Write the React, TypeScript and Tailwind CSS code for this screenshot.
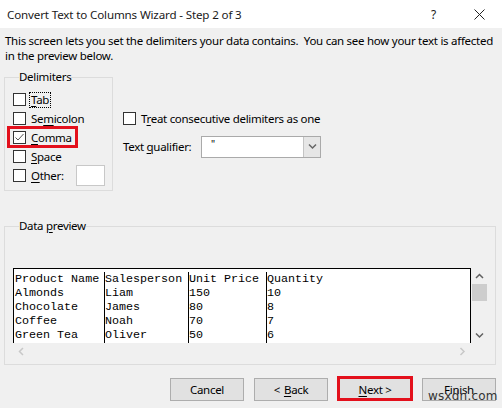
import React from "react";

function Box({ checked = false }: { checked?: boolean }) {
  return (
    <span className="w-[13px] h-[13px] shrink-0 bg-white border border-[#333333] flex items-center justify-center">
      {checked && (
        <svg width="11" height="11" viewBox="0 0 11 11">
          <path d="M1.5 5.5 L4 8 L9.5 2" fill="none" stroke="#555" strokeWidth="1" />
        </svg>
      )}
    </span>
  );
}

function Chevron({ dir, color }: { dir: "up" | "down" | "left" | "right"; color: string }) {
  const d =
    dir === "up"
      ? "M1 5 L4.5 1.5 L8 5"
      : dir === "down"
      ? "M1 1.5 L4.5 5 L8 1.5"
      : dir === "left"
      ? "M5 1 L1.5 4.5 L5 8"
      : "M1.5 1 L5 4.5 L1.5 8";
  const w = dir === "up" || dir === "down" ? 9 : 7;
  const h = dir === "up" || dir === "down" ? 7 : 9;
  return (
    <svg width={w} height={h} viewBox={`0 0 ${w} ${h}`}>
      <path d={d} fill="none" stroke={color} strokeWidth="1.5" />
    </svg>
  );
}

const rows = [
  ["Product Name", "Salesperson", "Unit Price", "Quantity"],
  ["Almonds", "Liam", "150", "10"],
  ["Chocolate", "James", "80", "8"],
  ["Coffee", "Noah", "70", "7"],
  ["Green Tea", "Oliver", "50", "6"],
];

export default function App() {
  return (
    <div className="w-[502px] h-[408px] bg-[#f0f0f0] font-['Noto_Sans',sans-serif] text-[11.5px] leading-[15px] tracking-[-0.3px] text-black overflow-hidden relative">
      {/* title bar */}
      <div className="h-[28px] bg-white flex items-center pl-[7px] pr-[17px] text-[#1a1a1a]">
        <span className="text-[11.6px] tracking-[-0.15px]">Convert Text to Columns Wizard - Step 2 of 3</span>
        <span className="ml-auto mr-[38px] text-[12px]">?</span>
        <svg width="11" height="11" viewBox="0 0 11 11">
          <path d="M0.5 0.5 L10.5 10.5 M10.5 0.5 L0.5 10.5" stroke="#222" strokeWidth="1" />
        </svg>
      </div>

      <p className="px-[5px] pt-[5px] leading-[15px] whitespace-nowrap tracking-[-0.27px]">
        This screen lets you set the delimiters your data contains.&nbsp; You can see how your text is affected
        <br />
        in the preview below.
      </p>

      <div className="flex mt-[6px] pl-[4px]">
        <fieldset className="w-[109px] h-[122px] border border-[#dcdcdc] pl-[8px] pr-[7px] pt-[5px]">
          <legend className="ml-[6px] leading-[16px]">Delimiters</legend>
          <div className="h-[19px] flex items-center gap-[3px]">
            <Box />
            <span className="border border-dotted border-black leading-[14px] px-[1px]">
              <u className="underline-offset-2">T</u>ab
            </span>
          </div>
          <div className="h-[19px] flex items-center gap-[5px]">
            <Box />
            <span>
              Se<u className="underline-offset-2">m</u>icolon
            </span>
          </div>
          <div className="h-[19px] flex items-center gap-[5px] relative">
            <Box checked />
            <span>
              <u className="underline-offset-2">C</u>omma
            </span>
            <span className="absolute left-[-6px] top-[-2px] w-[71px] h-[22px] border-[3px] border-[#e3101c]" />
          </div>
          <div className="h-[19px] flex items-center gap-[5px]">
            <Box />
            <span>
              <u className="underline-offset-2">S</u>pace
            </span>
          </div>
          <div className="h-[19px] flex items-center gap-[5px]">
            <Box />
            <span>
              <u className="underline-offset-2">O</u>ther:
            </span>
            <span className="ml-auto w-[29px] h-[21px] bg-white border border-[#c8c8c8]" />
          </div>
        </fieldset>

        <div className="ml-[10px] pt-[40px]">
          <div className="h-[19px] flex items-center gap-[5px]">
            <Box />
            <span>
              T<u className="underline-offset-2">r</u>eat consecutive delimiters as one
            </span>
          </div>
          <div className="mt-[8px] h-[21px] flex items-center">
            <span className="w-[78px]">
              Text <u className="underline-offset-2">q</u>ualifier:
            </span>
            <div className="w-[120px] h-[22px] bg-white border border-[#aaaaaa] flex">
              <span className="flex-1 pl-[9px] leading-[14px] text-[10px]">"</span>
              <span className="w-[17px] h-full bg-[#e6e6e6] border-l border-[#c4c4c4] flex items-center justify-center">
                <Chevron dir="down" color="#666" />
              </span>
            </div>
          </div>
        </div>
      </div>

      <fieldset className="ml-[4px] mt-[27px] w-[492px] h-[147px] border border-[#dcdcdc] pl-[8px] pt-[34px]">
        <legend className="ml-[6px] leading-[16px]">
          Data <u className="underline-offset-2">p</u>review
        </legend>
        <div className="flex">
          <div className="w-[458px] h-[75px] bg-white border-t border-l border-r border-black overflow-hidden font-['Liberation_Mono',monospace] text-[11.7px] leading-[14px] tracking-normal pt-[3px] flex flex-col">
            {rows.map((r, i) => (
              <div key={i} className="flex h-[14px] shrink-0">
                <span className="w-[91px] pl-[1px] border-r border-black whitespace-pre">{r[0]}</span>
                <span className="w-[84px] border-r border-black whitespace-pre">{r[1]}</span>
                <span className="w-[78px] border-r border-black whitespace-pre">{r[2]}</span>
                <span className="flex-1 whitespace-pre">{r[3]}</span>
              </div>
            ))}
            <div className="flex flex-1">
              <span className="w-[91px] border-r border-black" />
              <span className="w-[84px] border-r border-black" />
              <span className="w-[78px] border-r border-black" />
              <span className="flex-1" />
            </div>
          </div>
          <div className="w-[17px] h-[75px] flex flex-col items-center">
            <div className="h-[16px] flex items-center justify-center">
              <Chevron dir="up" color="#606060" />
            </div>
            <div className="w-[15px] h-[17px] bg-[#cdcdcd]" />
            <div className="flex-1" />
            <div className="h-[16px] flex items-center justify-center">
              <Chevron dir="down" color="#606060" />
            </div>
          </div>
        </div>
        <div className="w-[458px] h-[17px] flex items-center justify-between px-[5px]">
          <Chevron dir="left" color="#c8c8c8" />
          <Chevron dir="right" color="#c8c8c8" />
        </div>
      </fieldset>

      <div className="mt-[13px] flex justify-end gap-[10px] pr-[6px]">
        <button className="w-[74px] h-[23px] bg-[#e1e1e1] border border-[#adadad] flex items-center justify-center">
          Cancel
        </button>
        <button className="w-[74px] h-[23px] bg-[#e1e1e1] border border-[#adadad] flex items-center justify-center">
          &lt; <u className="underline-offset-2 ml-[4px]">B</u>ack
        </button>
        <button className="relative w-[74px] h-[23px] bg-[#e1e1e1] border border-[#adadad] flex items-center justify-center">
          <span>
            <u className="underline-offset-2">N</u>ext &gt;
          </span>
          <span className="absolute left-[-2px] top-[-3px] w-[76px] h-[25px] border-[3px] border-[#e3101c]" />
        </button>
        <button className="w-[74px] h-[23px] bg-[#e1e1e1] border border-[#adadad] flex items-center justify-center">
          Finish
        </button>
      </div>

      {/* watermark overlay */}
      <span className="absolute left-[428px] top-[390px] text-[12px] leading-[13px] font-['DejaVu_Sans',sans-serif] text-[#333] tracking-[0.2px]">
        wsxdn.com
      </span>
    </div>
  );
}
